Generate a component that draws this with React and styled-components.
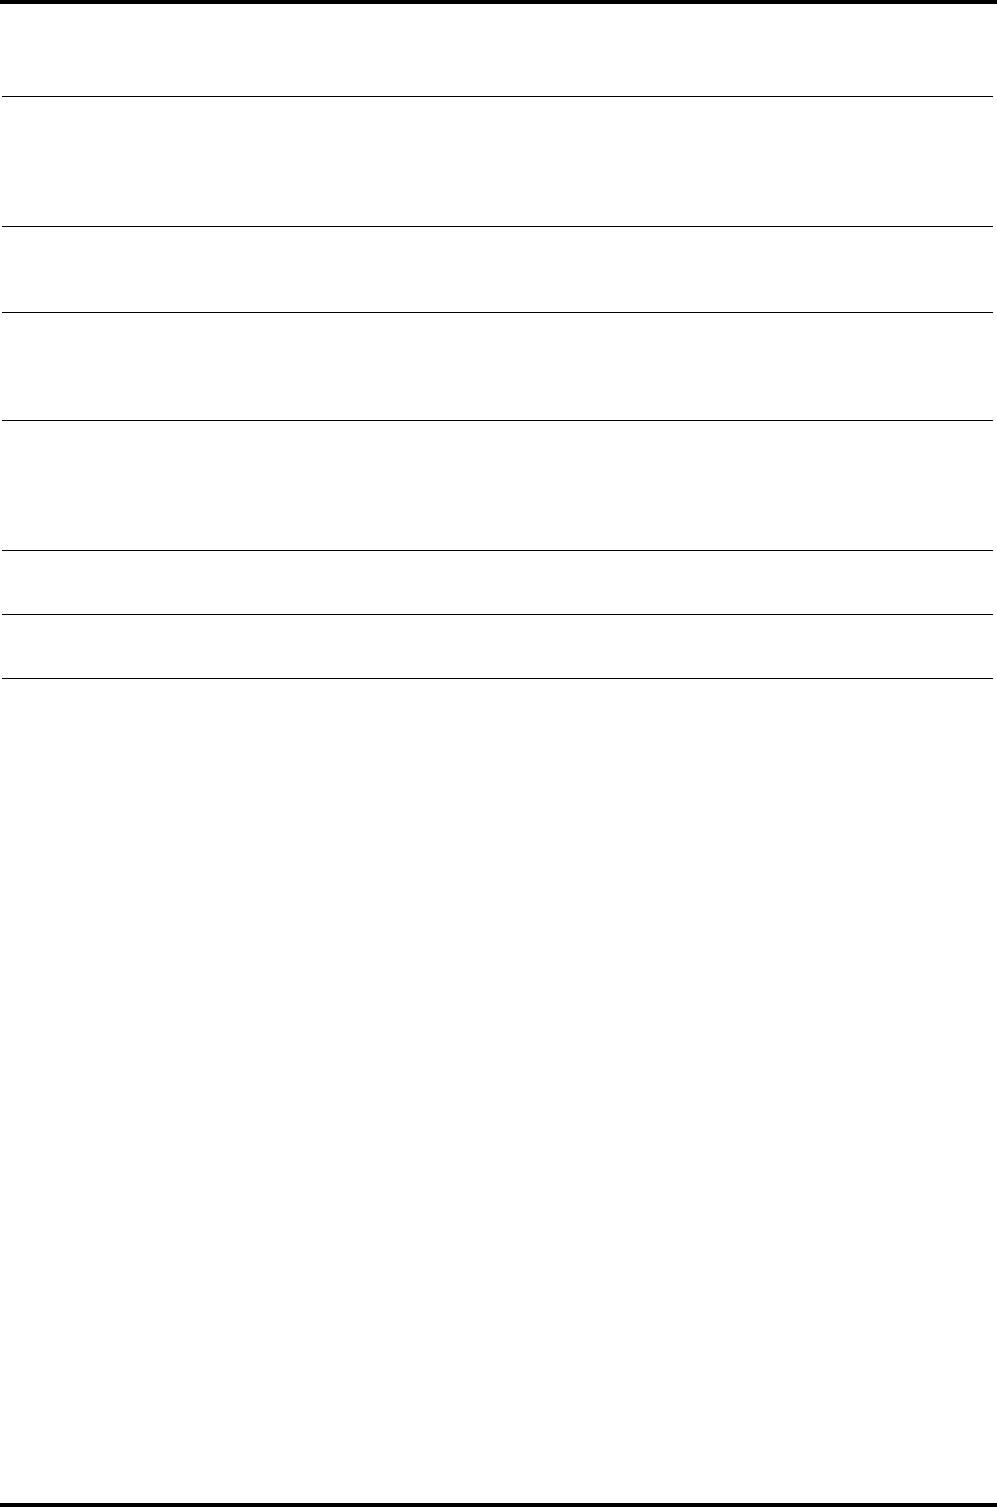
import React from "react";
import styled, { createGlobalStyle } from "styled-components";

const GlobalStyle = createGlobalStyle`
  html, body {
    margin: 0;
    padding: 0;
    background: #fff;
    font-family: "Liberation Sans", Arial, sans-serif;
  }
`;

const Page = styled.div`
  box-sizing: border-box;
  min-height: 1507px;
  display: flex;
  flex-direction: column;
  border-top: 4px solid #000;
  border-bottom: 4px solid #000;
`;

const Table = styled.div`
  display: flex;
  flex-direction: column;
  padding: 0 4px 0 2px;
  flex-grow: 1;
`;

const Row = styled.div`
  height: ${(p) => p.h}px;
  border-bottom: 1px solid #000;
`;

const rows = [92, 129, 85, 107, 129, 63, 63];

const App = () => {
    return (
        <>
            <GlobalStyle />
            <Page>
                <Table>
                    {rows.map((h, i) => (
                        <Row key={i} h={h} />
                    ))}
                </Table>
            </Page>
        </>
    );
};

export default App;
